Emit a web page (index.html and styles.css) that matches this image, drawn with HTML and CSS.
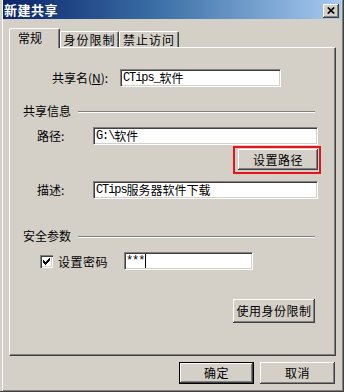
FILE: index.html
```html
<!DOCTYPE html>
<html lang="zh-CN">
<head>
<meta charset="utf-8">
<title>新建共享</title>
<link rel="stylesheet" href="styles.css">
</head>
<body>
<div class="window">
  <div class="titlebar">
    <span class="title">新建共享</span>
    <span class="close"><svg width="8" height="7" viewBox="0 0 8 7"><path d="M0.8 0.5 L7.2 6.5 M7.2 0.5 L0.8 6.5" stroke="#000" stroke-width="1.7" fill="none"/></svg></span>
  </div>
  <div class="tabs">
    <div class="tab active">常规</div>
    <div class="tab t2">身份限制</div>
    <div class="tab t3">禁止访问</div>
  </div>
  <div class="panel">
    <div class="row r-name">
      <span class="lbl lbl-name">共享名(<u>N</u>):</span>
      <div class="field f-name"><span class="en">CTips_</span>软件</div>
    </div>
    <div class="group g1"><span class="gtext">共享信息</span><i class="rule"></i></div>
    <div class="row r-path">
      <span class="lbl">路径:</span>
      <div class="field f-wide"><span class="en">G:\</span>软件</div>
    </div>
    <div class="row r-btn">
      <span class="highlight"><button class="btn btn-path">设置路径</button></span>
    </div>
    <div class="row r-desc">
      <span class="lbl">描述:</span>
      <div class="field f-wide"><span class="en">CTips</span>服务器软件下载</div>
    </div>
    <div class="group g2"><span class="gtext">安全参数</span><i class="rule"></i></div>
    <div class="row r-pass">
      <span class="check"><svg width="7" height="7" viewBox="0 0 7 7"><path d="M0 2 H1 V3 H2 V4 H3 V3 H4 V2 H5 V1 H6 V0 H7 V3 H6 V4 H5 V5 H4 V6 H3 V7 H2 V6 H1 V5 H0 Z" fill="#000"/></svg></span>
      <span class="check-lbl">设置密码</span>
      <div class="field f-pass"><span class="en">***</span><i class="caret"></i></div>
    </div>
    <div class="row r-ident">
      <button class="btn btn-ident">使用身份限制</button>
    </div>
  </div>
  <div class="footer">
    <button class="btn btn-foot btn-default">确定</button>
    <button class="btn btn-foot">取消</button>
  </div>
</div>
</body>
</html>
```
FILE: styles.css
```css
html, body {
  margin: 0;
  padding: 0;
}
body {
  font-family: "Noto Sans CJK SC", "Noto Sans", sans-serif;
  font-size: 12px;
  color: #000;
  background: #d4d0c8;
}
.window {
  width: 344px;
  height: 392px;
  box-sizing: border-box;
  background: #d4d0c8;
  border-right: 1px solid #404040;
  border-bottom: 1px solid #404040;
  box-shadow: inset 2px 0 0 #d4d0c8, inset 3px 0 0 #fff, inset -1px -1px 0 #808080;
  padding: 0 1px 0 3px;
  display: flex;
  flex-direction: column;
}
.titlebar {
  height: 19px;
  display: flex;
  align-items: flex-start;
  background: linear-gradient(to right, #0a246a 0%, #3a6ea5 45%, #a6caf0 100%);
  margin-right: 1px;
}
.title {
  color: #fff;
  font-weight: bold;
  font-size: 13px;
  line-height: 19px;
  padding-left: 1px;
  letter-spacing: 0.5px;
}
.close {
  margin: 4px 2px 0 auto;
  width: 16px;
  height: 14px;
  box-sizing: border-box;
  background: #d4d0c8;
  box-shadow: inset -1px -1px 0 #404040, inset 1px 1px 0 #fff, inset -2px -2px 0 #808080;
  display: flex;
  align-items: center;
  justify-content: center;
  padding-bottom: 1px;
}
.close svg { display: block; }

.tabs {
  display: flex;
  align-items: flex-end;
  height: 19px;
  margin: 9px 0 0 6px;
  position: relative;
  z-index: 1;
}
.tab {
  height: 16px;
  box-sizing: border-box;
  border-top: 1px solid #fff;
  border-left: 1px solid #fff;
  border-right: 1px solid #404040;
  box-shadow: inset -1px 0 0 #808080;
  border-radius: 2px 2px 0 0;
  line-height: 15px;
  text-align: center;
  background: #d4d0c8;
  letter-spacing: 1px;
  white-space: nowrap;
}
.tab.active {
  width: 51px;
  height: 20px;
  margin-bottom: -1px;
  text-align: left;
  padding-left: 8px;
  line-height: 18px;
  letter-spacing: 0;
}
.tab.t2 { width: 59px; }
.tab.t3 { width: 60px; }

.panel {
  margin: 0 6px 0 6px;
  height: 309px;
  box-sizing: border-box;
  border-top: 1px solid #fff;
  border-left: 1px solid #fff;
  border-right: 1px solid #404040;
  border-bottom: 1px solid #404040;
  box-shadow: inset -1px -1px 0 #808080;
  padding: 0 17px 0 13px;
  display: flex;
  flex-direction: column;
}
.row {
  display: flex;
  align-items: center;
}
.lbl {
  width: 70px;
  box-sizing: border-box;
  padding-left: 14px;
  flex: none;
  line-height: 14px;
}
.lbl-name {
  width: 97px;
  padding-left: 29px;
}
.field {
  height: 18px;
  box-sizing: border-box;
  background: #fff;
  border-top: 1px solid #808080;
  border-left: 1px solid #808080;
  border-right: 1px solid #fff;
  border-bottom: 1px solid #fff;
  box-shadow: inset 1px 1px 0 #404040, inset -1px -1px 0 #d4d0c8;
  padding: 0 0 0 2px;
  line-height: 16px;
  white-space: nowrap;
  display: flex;
  align-items: center;
}
.en {
  font-family: "Liberation Mono", monospace;
  font-size: 12px;
  letter-spacing: -1.1px;
}
.f-name { width: 161px; }
.f-wide { flex: 1; }
.f-pass { width: 129px; padding-left: 1px; }
.caret {
  display: inline-block;
  width: 1px;
  height: 14px;
  background: #000;
  margin-left: 1px;
}

.r-name { margin-top: 21px; }
.group {
  display: flex;
  align-items: center;
  height: 12px;
  line-height: 12px;
}
.g1 { margin-top: 18px; }
.g2 { margin-top: 31px; }
.rule {
  flex: 1;
  height: 0;
  border-top: 1px solid #808080;
  border-bottom: 1px solid #fff;
  margin: 1px 3px 0 7px;
}
.r-path { margin-top: 10px; }
.r-btn {
  margin-top: 1px;
  justify-content: flex-end;
}
.highlight {
  display: flex;
  border: 2px solid #e8141a;
  padding: 1px 1px 2px 3px;
  margin-right: -3px;
}
.r-desc { margin-top: 7px; }
.r-pass { margin-top: 10px; }
.check {
  width: 13px;
  height: 13px;
  box-sizing: border-box;
  margin-left: 17px;
  background: #fff;
  box-shadow: inset 1px 1px 0 #808080, inset 2px 2px 0 #404040, inset -1px -1px 0 #fff, inset -2px -2px 0 #d4d0c8;
  display: flex;
  align-items: center;
  justify-content: center;
  flex: none;
}
.check svg { display: block; }
.check-lbl {
  margin-left: 5px;
  width: 66px;
  flex: none;
  white-space: nowrap;
  letter-spacing: 0.5px;
}
.r-ident {
  margin-top: 29px;
  justify-content: flex-end;
}

.btn {
  font-family: inherit;
  font-size: 12px;
  color: #000;
  background: #d4d0c8;
  border: 0;
  padding: 0;
  margin: 0;
  box-sizing: border-box;
  box-shadow: inset -1px -1px 0 #404040, inset 1px 1px 0 #fff, inset -2px -2px 0 #808080, inset 2px 2px 0 #d4d0c8;
  letter-spacing: 0.5px;
  line-height: 14px;
  white-space: nowrap;
}
.btn-path {
  width: 80px;
  height: 21px;
}
.btn-ident {
  width: 82px;
  height: 24px;
  margin-right: 3px;
}
.footer {
  display: flex;
  justify-content: flex-end;
  gap: 6px;
  margin: 6px 7px 0 0;
}
.btn-foot {
  width: 75px;
  height: 22px;
}
.btn-default {
  border: 1px solid #000;
}
```
